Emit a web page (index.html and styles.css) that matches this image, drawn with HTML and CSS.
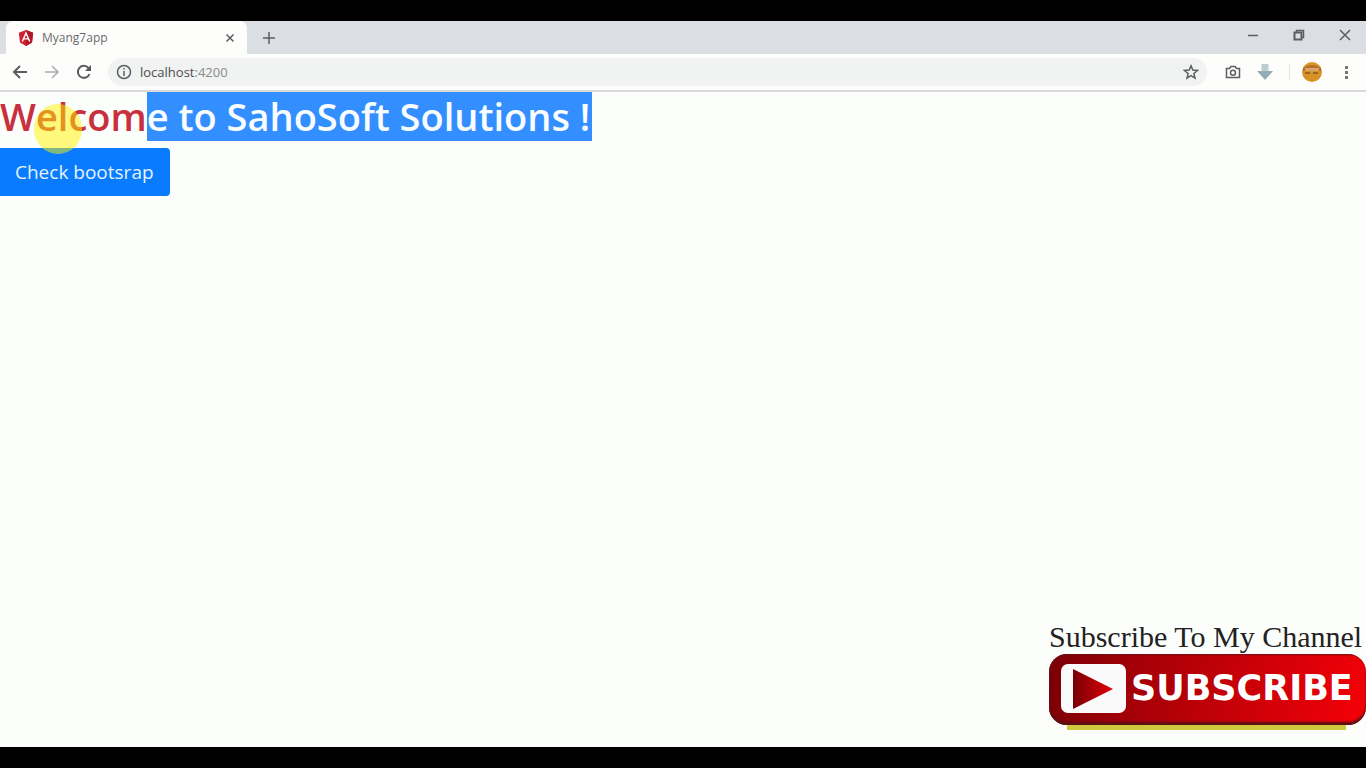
FILE: index.html
```html
<!DOCTYPE html>
<html lang="en">
<head>
<meta charset="utf-8">
<title>Myang7app</title>
<link rel="stylesheet" href="styles.css">
</head>
<body>
<div class="browser">
  <header class="tab-strip">
    <div class="tab">
      <svg class="favicon" width="16" height="16" viewBox="0 0 16 18"><path fill="#d3202f" d="M8 0l8 3-1.200 11L8 18l-6.800-4L0 3z"/><path fill="#b0182a" d="M8 0l8 3-1.200 11L8 18z"/><path fill="none" stroke="#fff" stroke-width="1.600" d="M3.800 13L8 3.500l4.200 9.500M5.500 10h5"/></svg>
      <span class="tab-title">Myang7app</span>
      <button class="icon-button" aria-label="Close tab"><svg width="10" height="10" viewBox="0 0 10 10"><path class="line" d="M1.500 1.500l7 7m0-7l-7 7"/></svg></button>
    </div>
    <button class="icon-button new-tab" aria-label="New tab"><svg width="14" height="14" viewBox="0 0 14 14"><path class="line" d="M7 1v12M1 7h12"/></svg></button>
    <div class="window-controls">
      <button class="icon-button" aria-label="Minimize"><svg width="14" height="14" viewBox="0 0 14 14"><path class="line" d="M2 7.500h10"/></svg></button>
      <button class="icon-button" aria-label="Restore"><svg width="14" height="14" viewBox="0 0 14 14"><path class="line bold" d="M2.500 4.500h7v7h-7z"/><path class="line" d="M4.500 4.500v-2h7v7h-2"/></svg></button>
      <button class="icon-button" aria-label="Close"><svg width="14" height="14" viewBox="0 0 14 14"><path class="line" d="M2 2l10 10m0-10L2 12"/></svg></button>
    </div>
  </header>
  <nav class="toolbar">
    <div class="history">
      <button class="icon-button" aria-label="Back"><svg width="16" height="16" viewBox="0 0 16 16"><path class="line bold" d="M15 8H2m6-6L2 8l6 6"/></svg></button>
      <button class="icon-button faded" aria-label="Forward"><svg width="16" height="16" viewBox="0 0 16 16"><path class="line" d="M1 8h13M8 2l6 6-6 6"/></svg></button>
      <button class="icon-button" aria-label="Reload"><svg width="16" height="16" viewBox="0 0 16 16"><path class="line bold" d="M13.500 10A6 6 0 1 1 12.500 4"/><path fill="#555a5e" d="M15 1v6H9z"/></svg></button>
    </div>
    <div class="address">
      <svg width="16" height="16" viewBox="0 0 16 16"><circle class="line" cx="8" cy="8" r="6.500"/><path class="line" d="M8 7v5M8 4v1.600"/></svg>
      <span class="url"><span class="host">localhost</span>:4200</span>
      <button class="icon-button" aria-label="Bookmark"><svg width="16" height="16" viewBox="0 0 16 16"><path class="line" d="M8 1.800l1.800 4.300 4.700.400-3.600 3 1.100 4.600L8 11.700l-4 2.400 1.100-4.600-3.600-3 4.700-.400z"/></svg></button>
    </div>
    <div class="extensions">
      <button class="icon-button" aria-label="Screenshot"><svg width="16" height="16" viewBox="0 0 16 16"><path class="line" d="M1.500 4.500h3l1.500-2h4l1.500 2h3v9h-13z"/><circle class="line" cx="8" cy="8.800" r="2.500"/></svg></button>
      <button class="icon-button" aria-label="Download"><svg width="16" height="16" viewBox="0 0 16 16"><path fill="#bccdd2" d="M4.500 0h7v7h-7z"/><path fill="#92adb4" d="M0 7h16l-8 9z"/></svg></button>
      <span class="divider"></span>
      <button class="icon-button" aria-label="Profile"><svg width="20" height="20" viewBox="0 0 20 20"><circle cx="10" cy="10" r="10" fill="#d99225"/><path fill="#b86d2c" d="M1 6q9-6 18 0v3H1z"/><path fill="#d8a26c" d="M3 6h14v3H3z"/><path stroke="#a0601f" stroke-width="2" d="M3 11h5m3 0h5"/></svg></button>
      <button class="icon-button" aria-label="Menu"><svg width="16" height="16" viewBox="0 0 16 16"><path fill="#777" d="M7 2h3v3H7zM7 7h3v3H7zM7 12h3v3H7z"/></svg></button>
    </div>
  </nav>
  <main class="page">
    <h1 class="heading"><span>Welcom</span><span class="selected">e to SahoSoft Solutions !</span></h1>
    <button class="primary">Check bootsrap</button>
    <span class="pointer-glow"></span>
    <aside class="promo">
      <p class="promo-text">Subscribe To My Channel</p>
      <button class="subscribe">
        <svg width="65" height="49" viewBox="0 0 65 49"><defs><linearGradient id="play"><stop stop-color="#780006"/><stop offset="1" stop-color="#e00008"/></linearGradient></defs><rect width="65" height="49" rx="7" fill="#fafafa"/><path fill="url(#play)" d="M12 5v40l40-20z"/></svg>
        <span>SUBSCRIBE</span>
      </button>
      <div class="underline"></div>
    </aside>
  </main>
</div>
</body>
</html>
```
FILE: styles.css
```css
* { box-sizing: border-box; }
body { margin: 0; background: #000; font-family: "Open Sans", "Noto Sans", sans-serif; }
button { font: inherit; }
.browser { display: flex; flex-direction: column; height: 100vh; padding: 21px 0; }
.tab-strip { display: flex; align-items: center; height: 33px; background: #dbdee2; flex: none; }
.tab { display: flex; align-items: center; gap: 8px; width: 241px; height: 33px; margin-left: 6px; padding: 0 12px; background: #fdfefc; border-radius: 7px 7px 0 0; }
.tab-title { flex: 1; font-size: 12px; color: #6b6b6b; }
.icon-button { display: flex; align-items: center; justify-content: center; padding: 0; border: 0; background: none; }
.line { fill: none; stroke: #5b5e62; stroke-width: 1.5; }
.bold { stroke-width: 2; }
.faded { opacity: .5; }
.new-tab { margin-left: 15px; }
.window-controls { display: flex; gap: 32px; margin-left: auto; padding: 0 14px 6px 0; }
.toolbar { display: flex; align-items: center; height: 38px; padding: 0 12px; background: #fdfefc; border-bottom: 2px solid #d9dad9; flex: none; }
.history { display: flex; gap: 16px; margin-right: 16px; }
.address { display: flex; flex: 1; align-items: center; gap: 8px; height: 28px; padding: 0 8px; border-radius: 14px; background: #f1f2f2; }
.url { flex: 1; font-size: 13px; color: #8b8b8b; }
.host { color: #4d4d4d; }
.extensions { display: flex; align-items: center; gap: 16px; margin-left: 18px; }
.divider { width: 1px; height: 16px; margin-right: -4px; background: #e3e6e8; }
.page { position: relative; flex: 1; background: #fcfefb; }
.heading { display: flex; margin: 0 0 7px; font-size: 38px; line-height: 49px; font-weight: 600; color: #c9303e; white-space: pre; }
.selected { padding-right: 2px; background: #338fff; color: #fafdff; }
.primary { display: block; height: 48px; padding: 0 16px 0 15px; border: 0; border-radius: 0 4px 4px 0; background: #087bff; color: #e6f3ff; font-size: 19px; }
.pointer-glow { position: absolute; left: 34px; top: 12px; width: 48px; height: 50px; border-radius: 50%; background: #fff200; opacity: .5; }
.promo { position: absolute; right: 0; bottom: 17px; width: 317px; }
.promo-text { margin: 0; font-family: "Liberation Serif", serif; font-size: 30px; line-height: 34px; color: #222; white-space: nowrap; }
.subscribe { display: flex; align-items: center; gap: 5px; width: 100%; height: 71px; padding: 0 0 2px 12px; border: 0; border-radius: 18px; background: linear-gradient(100deg, #790006, #a50007 28%, #ef0008 95%); box-shadow: inset 0 -3px 2px #5b1011, inset 1px 1px 2px #701017; color: #fff; font: bold 35px/1 "DejaVu Sans", sans-serif; }
.underline { height: 5px; margin: 0 20px 0 18px; background: #cfca3d; }
```
